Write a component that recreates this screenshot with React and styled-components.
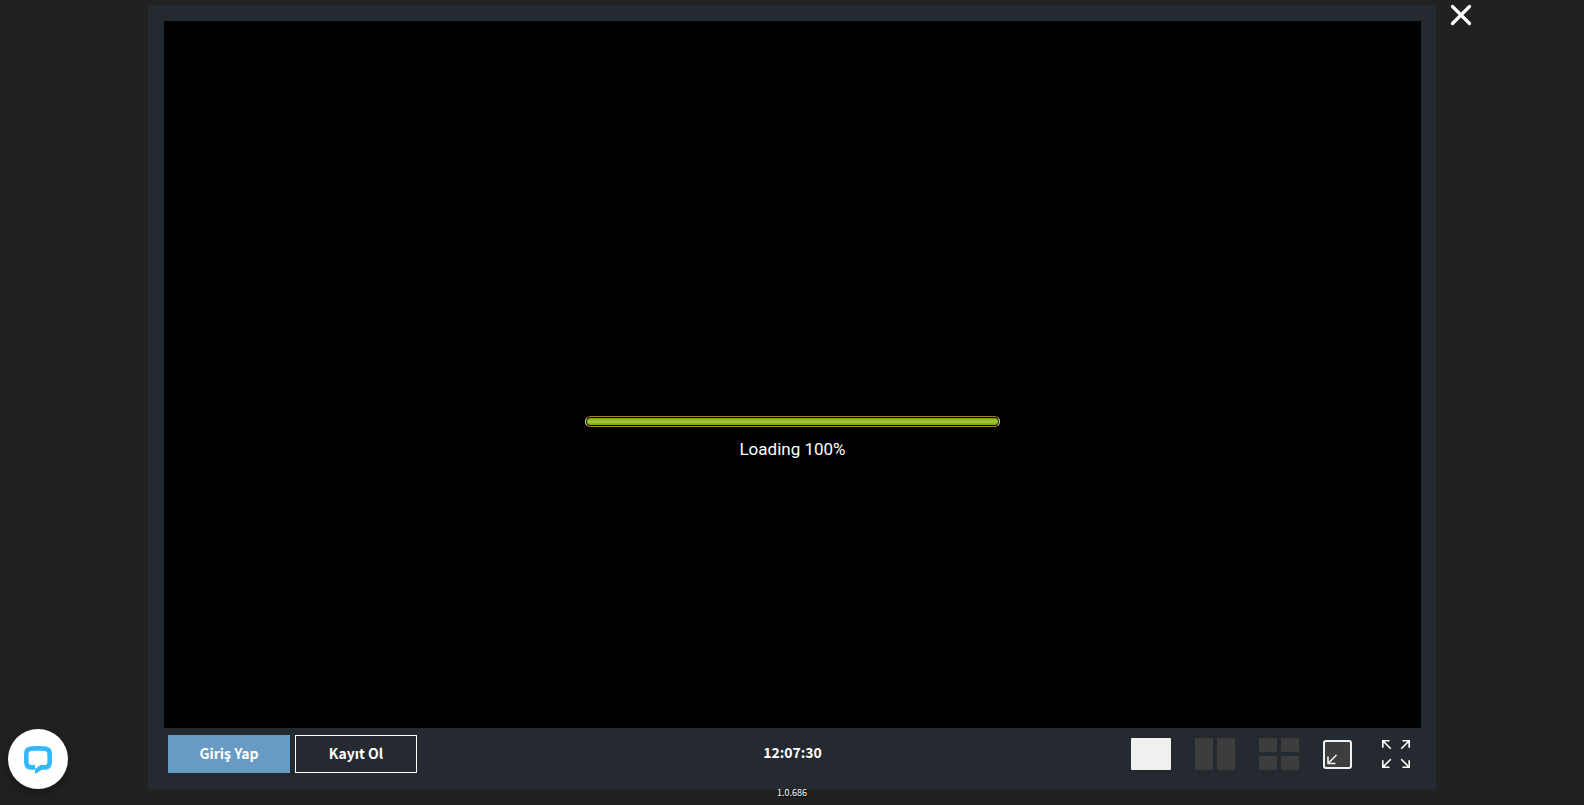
import styled, { createGlobalStyle, css } from 'styled-components';

const GlobalStyle = createGlobalStyle`
	*, *::before, *::after {
		box-sizing: border-box;
	}

	body {
		margin: 0;
		background: #212121;
		color: #fff;
		font-family: "Noto Sans CJK JP", "Noto Sans", sans-serif;
	}

	button {
		font-family: inherit;
		cursor: pointer;
	}
`;

const Page = styled.div`
	min-height: 100vh;
	display: grid;
	grid-template-columns: 148px minmax(0, 1fr) 148px;
	align-items: start;
	padding-top: 4px;
`;

const Stage = styled.main`
	grid-column: 2;
	padding-top: 1px;
`;

const Panel = styled.section`
	background: #252a31;
	padding: 16px 15px 0 16px;
`;

const Screen = styled.div`
	aspect-ratio: 16 / 9;
	background: #000;
	display: flex;
	flex-direction: column;
	align-items: center;
	justify-content: center;
	gap: 12px;
	padding-top: 126px;
`;

const Track = styled.div`
	width: 33%;
	height: 11px;
	padding: 1px;
	border: 1px solid #a8842c;
	border-left-color: #e8dcae;
	border-right-color: #e8dcae;
	border-radius: 6px;
`;

const Fill = styled.div`
	height: 100%;
	border-radius: 4px;
	background: linear-gradient(#7ba60a, #a3cc33 50%, #7ba60a);
`;

const LoadingText = styled.p`
	margin: 0;
	font-family: Roboto, sans-serif;
	font-size: 17px;
	line-height: 20px;
`;

const Footer = styled.footer`
	display: grid;
	grid-template-columns: 1fr auto 1fr;
	align-items: start;
	padding: 7px 0 17px;
`;

const Actions = styled.div`
	display: flex;
	gap: 5px;
	padding-left: 4px;
`;

const ActionButton = styled.button`
	width: 122px;
	height: 38px;
	padding: 0 0 2px;
	border: 1px solid #fff;
	background: transparent;
	color: #fff;
	font-size: 14px;
	font-weight: 700;
	line-height: 20px;

	${({ $primary }) => $primary && css`
		border-color: #679bc3;
		background: #679bc3;
	`}
`;

const Clock = styled.time`
	font-size: 14px;
	font-weight: 700;
	line-height: 34px;
`;

const Views = styled.div`
	display: flex;
	justify-content: flex-end;
	align-items: center;
	gap: 24px;
	height: 38px;
	padding-right: 11px;
`;

const IconButton = styled.button`
	display: flex;
	padding: 0;
	border: 0;
	background: none;
	color: #fff;
`;

const WindowTools = styled.div`
	display: flex;
	gap: 30px;
`;

const LayoutGrid = styled.span`
	display: grid;
	grid-template-columns: repeat(${({ $cols }) => $cols}, 1fr);
	gap: 4px;
	width: 40px;
	height: 32px;
`;

const Cell = styled.span`
	border-radius: 1px;
	background: ${({ $active }) => ($active ? '#f0f0f0' : '#3d3d3d')};
`;

const Version = styled.p`
	margin: 0;
	text-align: center;
	font-size: 9px;
	line-height: 6px;
	text-shadow: 1px 1px 1px #000;
`;

const CloseButton = styled(IconButton)`
	margin-left: 14px;
`;

const ChatButton = styled.button`
	position: fixed;
	left: 8px;
	bottom: 16px;
	width: 60px;
	height: 60px;
	display: flex;
	align-items: center;
	justify-content: center;
	padding: 0;
	border: 0;
	border-radius: 50%;
	background: #fff;
	box-shadow: 0 4px 12px rgba(0, 0, 0, .3);
`;

const layouts = [
	{ label: 'Tek ekran', cols: 1, cells: 1, active: true },
	{ label: 'İki ekran', cols: 2, cells: 2 },
	{ label: 'Dört ekran', cols: 2, cells: 4 },
];

const MinimizeIcon = () => (
	<svg width="29" height="29" viewBox="0 0 29 29" fill="none" aria-hidden="true">
		<rect x="1" y="1" width="27" height="27" rx="2" fill="#3d3d3d" stroke="#f0f0f0" strokeWidth="2" />
		<path d="M5 16.500v7h7.500M5 23.500l8.500-8.500" stroke="#f0f0f0" strokeWidth="1.6" />
	</svg>
);

const FullscreenIcon = () => (
	<svg width="28" height="28" viewBox="0 0 28 28" fill="none" aria-hidden="true">
		<path
			d="M7.500 .8H.8v7M.8 .8l8 8M20.500 .8H27.200v7M27.200 .8l-8 8M7.500 27.200H.8v-7M.8 27.200l8-8M20.500 27.200H27.200v-7M27.200 27.200l-8-8"
			stroke="#fff"
			strokeWidth="1.6"
		/>
	</svg>
);

const CloseIcon = () => (
	<svg width="22" height="22" viewBox="0 0 22 22" aria-hidden="true">
		<path d="M2.500 2.500l17 17M19.500 2.500l-17 17" stroke="#fff" strokeWidth="3.200" strokeLinecap="round" />
	</svg>
);

const ChatIcon = () => (
	<svg width="28" height="30" viewBox="0 -2 28 30" aria-hidden="true">
		<path
			fill="#34b8fd"
			d="M6 .6C10 -.1 18 -.1 22 .6C25.500 1.200 27.400 3 27.800 6C28.100 9 28.100 15 27.800 18C27.300 21.500 25 23.600 21.500 23.800H18L11 28V23L16.500 19H20.500C22.300 19 23.200 18.200 23.300 16.500C23.500 13.500 23.500 10.500 23.300 7.500C23.200 6 22.300 5.200 20.800 5C16 4.600 12 4.600 7.200 5C5.700 5.200 4.800 6 4.700 7.500C4.500 10.500 4.500 13.500 4.700 16.500C4.800 18.200 5.700 19 7.500 19H11V23.800H6.500C3 23.600 .7 21.500 .2 18C-.1 15 -.1 9 .2 6C.6 3 2.500 1.200 6 .6Z"
		/>
	</svg>
);

const App = () => {
	return (
		<>
			<GlobalStyle />
			<Page>
				<Stage>
					<Panel>
						<Screen>
							<Track role="progressbar" aria-label="Loading" aria-valuenow={100}>
								<Fill />
							</Track>
							<LoadingText>Loading 100%</LoadingText>
						</Screen>
						<Footer>
							<Actions>
								<ActionButton type="button" $primary>Giriş Yap</ActionButton>
								<ActionButton type="button">Kayıt Ol</ActionButton>
							</Actions>
							<Clock>12:07:30</Clock>
							<Views>
								{layouts.map(({ label, cols, cells, active }) => (
									<IconButton key={label} type="button" aria-label={label}>
										<LayoutGrid $cols={cols}>
											{Array.from({ length: cells }, (_, i) => (
												<Cell key={i} $active={active} />
											))}
										</LayoutGrid>
									</IconButton>
								))}
								<WindowTools>
									<IconButton type="button" aria-label="Küçült"><MinimizeIcon /></IconButton>
									<IconButton type="button" aria-label="Tam ekran"><FullscreenIcon /></IconButton>
								</WindowTools>
							</Views>
						</Footer>
					</Panel>
					<Version>1.0.686</Version>
				</Stage>
				<CloseButton type="button" aria-label="Kapat"><CloseIcon /></CloseButton>
			</Page>
			<ChatButton type="button" aria-label="Canlı destek"><ChatIcon /></ChatButton>
		</>
	);
};

export default App;
